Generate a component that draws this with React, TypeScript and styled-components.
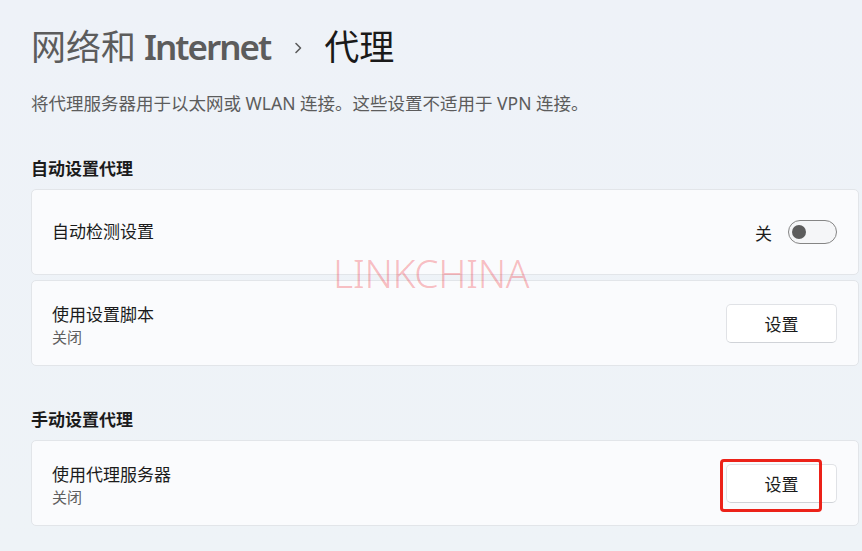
import styled, { createGlobalStyle } from "styled-components";

const GlobalStyle = createGlobalStyle`
  html, body {
    margin: 0;
    padding: 0;
    background: #eef2f7;
  }
  body {
    font-family: "Noto Sans", "Noto Sans CJK SC", sans-serif;
    color: #1b1b1b;
  }
`;

const Page = styled.div`
  position: relative;
  width: 862px;
  height: 551px;
  overflow: hidden;
  box-sizing: border-box;
  padding: 23px 3px 0 31px;
  background: linear-gradient(180deg, #eef2f8 0%, #eef3f7 100%);
`;

const Title = styled.h1`
  display: flex;
  align-items: center;
  margin: 0;
  height: 48px;
  font-size: 35px;
  line-height: 48px;
  font-weight: 400;
  color: #5c5c5c;
  white-space: nowrap;
`;

const Latin = styled.span`
  font-weight: 600;
  letter-spacing: -2px;
  margin-left: 8px;
`;

const Current = styled.span`
  color: #1a1a1a;
`;

const Chevron = styled.svg`
  margin: 2px 22px 0 24px;
`;

const Description = styled.p`
  margin: 20px 0 0;
  font-size: 17.5px;
  line-height: 24px;
  color: #5c5c5c;
`;

const Section = styled.section`
  margin-top: 42px;
  display: flex;
  flex-direction: column;
  gap: 5px;
`;

const SectionHeader = styled.h2`
  margin: 0 0 3px;
  font-size: 17px;
  line-height: 24px;
  font-weight: 600;
  color: #1b1b1b;
`;

const Card = styled.div`
  display: flex;
  align-items: center;
  justify-content: space-between;
  box-sizing: border-box;
  height: 86px;
  padding: 0 21px 0 20px;
  background: #fafbfd;
  border: 1px solid #e2e5e9;
  border-radius: 5px;
`;

const Label = styled.div`
  display: flex;
  flex-direction: column;
  padding-top: 4px;
`;

const LabelTitle = styled.span`
  font-size: 17px;
  line-height: 22px;
  color: #1b1b1b;
`;

const Caption = styled.span`
  margin-top: 1px;
  font-size: 15px;
  line-height: 20px;
  color: #5f5f5f;
`;

const ToggleGroup = styled.div`
  display: flex;
  align-items: center;
  gap: 16px;
  font-size: 17px;
  color: #1b1b1b;
`;

const Toggle = styled.div<{ $on?: boolean }>`
  box-sizing: border-box;
  width: 49px;
  height: 24px;
  border: 1px solid #858585;
  border-radius: 12px;
  background: #f5f6f8;
  display: flex;
  align-items: center;
  justify-content: ${(p) => (p.$on ? "flex-end" : "flex-start")};
  padding: 0 3px;
`;

const Knob = styled.span`
  width: 14px;
  height: 14px;
  border-radius: 50%;
  background: #5d5d5d;
`;

const ButtonWrap = styled.div`
  position: relative;
`;

const Button = styled.button`
  box-sizing: border-box;
  width: 111px;
  height: 39px;
  border: 1px solid #e0e2e6;
  border-bottom-color: #d0d3d8;
  border-radius: 5px;
  background: #ffffff;
  font-family: inherit;
  font-size: 17px;
  color: #1b1b1b;
  cursor: pointer;
`;

const Highlight = styled.span`
  position: absolute;
  left: -6px;
  top: -5px;
  width: 102px;
  height: 53px;
  box-sizing: border-box;
  border: 3px solid #ec2219;
  border-radius: 4px;
  pointer-events: none;
`;

const Watermark = styled.div`
  position: absolute;
  left: 333px;
  top: 246px;
  font-family: "Noto Sans", sans-serif;
  font-size: 39px;
  font-weight: 300;
  letter-spacing: -0.4px;
  color: rgba(240, 40, 50, 0.3);
  pointer-events: none;
`;

function SettingButton({ marked }: { marked?: boolean }) {
  return (
    <ButtonWrap>
      <Button>设置</Button>
      {marked && <Highlight />}
    </ButtonWrap>
  );
}

export default function App() {
  return (
    <Page>
      <GlobalStyle />
      <Title>
        网络和<Latin>Internet</Latin>
        <Chevron width="8" height="12" viewBox="0 0 8 12">
          <path d="M2 1.5 L6.5 6 L2 10.5" fill="none" stroke="#5c5c5c" strokeWidth="1.6" strokeLinecap="round" strokeLinejoin="round" />
        </Chevron>
        <Current>代理</Current>
      </Title>
      <Description>将代理服务器用于以太网或 WLAN 连接。这些设置不适用于 VPN 连接。</Description>

      <Section>
        <SectionHeader>自动设置代理</SectionHeader>
        <Card>
          <LabelTitle>自动检测设置</LabelTitle>
          <ToggleGroup>
            关
            <Toggle>
              <Knob />
            </Toggle>
          </ToggleGroup>
        </Card>
        <Card>
          <Label>
            <LabelTitle>使用设置脚本</LabelTitle>
            <Caption>关闭</Caption>
          </Label>
          <SettingButton />
        </Card>
      </Section>

      <Section>
        <SectionHeader>手动设置代理</SectionHeader>
        <Card>
          <Label>
            <LabelTitle>使用代理服务器</LabelTitle>
            <Caption>关闭</Caption>
          </Label>
          <SettingButton marked />
        </Card>
      </Section>

      <Watermark>LINKCHINA</Watermark>
    </Page>
  );
}
